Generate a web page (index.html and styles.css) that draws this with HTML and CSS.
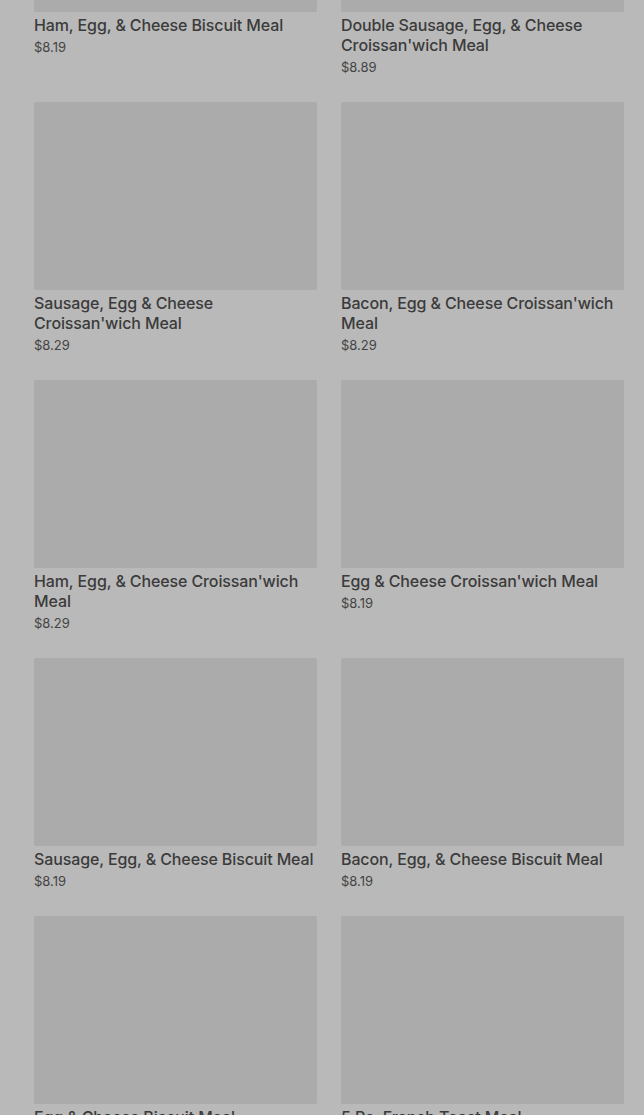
FILE: index.html
```html
<!DOCTYPE html>
<html lang="en">
<head>
  <meta charset="UTF-8">
  <meta name="viewport" content="width=device-width, initial-scale=1.0">
  <title>Breakfast Meals</title>
  <link rel="stylesheet" href="styles.css">
</head>
<body>

  <div class="menu-grid">
    <div class="item">
      <div class="thumb"></div>
      <div class="name">Ham, Egg, &amp; Cheese Biscuit Meal</div>
      <div class="price">$8.19</div>
    </div>
    <div class="item">
      <div class="thumb"></div>
      <div class="name">Double Sausage, Egg, &amp; Cheese Croissan'wich Meal</div>
      <div class="price">$8.89</div>
    </div>

    <div class="item">
      <div class="thumb"></div>
      <div class="name">Sausage, Egg &amp; Cheese Croissan'wich Meal</div>
      <div class="price">$8.29</div>
    </div>
    <div class="item">
      <div class="thumb"></div>
      <div class="name">Bacon, Egg &amp; Cheese Croissan'wich Meal</div>
      <div class="price">$8.29</div>
    </div>

    <div class="item">
      <div class="thumb"></div>
      <div class="name">Ham, Egg, &amp; Cheese Croissan'wich Meal</div>
      <div class="price">$8.29</div>
    </div>
    <div class="item">
      <div class="thumb"></div>
      <div class="name">Egg &amp; Cheese Croissan'wich Meal</div>
      <div class="price">$8.19</div>
    </div>

    <div class="item">
      <div class="thumb"></div>
      <div class="name">Sausage, Egg, &amp; Cheese Biscuit Meal</div>
      <div class="price">$8.19</div>
    </div>
    <div class="item">
      <div class="thumb"></div>
      <div class="name">Bacon, Egg, &amp; Cheese Biscuit Meal</div>
      <div class="price">$8.19</div>
    </div>

    <div class="item">
      <div class="thumb"></div>
      <div class="name">Egg &amp; Cheese Biscuit Meal</div>
      <div class="price">$7.79</div>
    </div>
    <div class="item">
      <div class="thumb"></div>
      <div class="name">5 Pc. French Toast Meal</div>
      <div class="price">$7.49</div>
    </div>
  </div>

</body>
</html>
```

FILE: styles.css
```css
body {
  margin: 0;
  background: #b9b9b9;
  font-family: Inter, Roboto, sans-serif;
  color: #3a3a3a;
  overflow: hidden;
  height: 1115px;
}

/* page is scrolled: first row sits partly above the fold */
.menu-grid {
  display: grid;
  grid-template-columns: 283px 283px;
  column-gap: 24px;
  row-gap: 26px;
  align-items: start;
  padding: 0 20px 0 34px;
  margin-top: -176px;
}

.item {
  display: flex;
  flex-direction: column;
}

.thumb {
  height: 188px;
  background: #ababab;
  border-radius: 2px;
}

.name {
  margin-top: 3px;
  font-size: 16px;
  line-height: 20px;
  font-weight: 500;
  letter-spacing: -0.12px;
  color: #3b3b3b;
}

.price {
  margin-top: 3px;
  font-size: 13px;
  line-height: 18px;
  color: #444;
}
```
